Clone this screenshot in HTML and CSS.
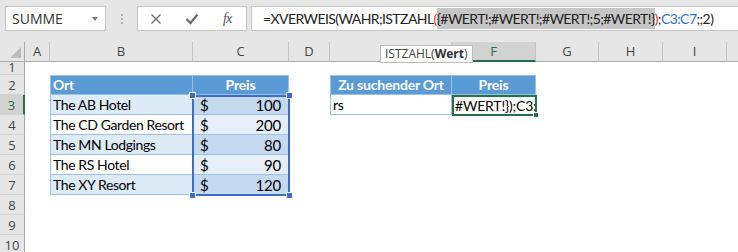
FILE: index.html
```html
<!DOCTYPE html>
<html lang="de">
<head>
  <meta charset="UTF-8">
  <title>XVERWEIS</title>
  <link rel="stylesheet" href="styles.css">
</head>
<body>
  <div class="topbar">
    <div class="namebox">
      <span>SUMME</span>
      <span class="caret"></span>
    </div>
    <div class="grip"><i></i><i></i><i></i></div>
    <div class="fxbox">
      <svg class="ico" width="12" height="12" viewBox="0 0 12 12">
        <path d="M1.5 1.5 L10.5 10.5 M10.5 1.5 L1.5 10.5" stroke="#6b6b6b" stroke-width="1.4" fill="none"/>
      </svg>
      <svg class="ico" width="14" height="12" viewBox="0 0 14 12">
        <path d="M1.5 6 L5.5 10 L12.5 1.5" stroke="#6b6b6b" stroke-width="2.2" fill="none"/>
      </svg>
      <span class="fx">fx</span>
    </div>
    <div class="formula">=XVERWEIS(WAHR;ISTZAHL<span class="red">(</span><span class="hl">{#WERT!;#WERT!;#WERT!;5;#WERT!}</span><span class="red">)</span>;<span class="ref">C3:C7</span>;;2)</div>
  </div>

  <div class="sheet">
    <div class="colheads">
      <div class="corner"><span class="tri"></span></div>
      <div class="ch">A</div>
      <div class="ch">B</div>
      <div class="ch">C</div>
      <div class="ch">D</div>
      <div class="ch">E</div>
      <div class="ch current">F</div>
      <div class="ch">G</div>
      <div class="ch">H</div>
      <div class="ch">I</div>
      <div class="ch"></div>
    </div>

    <div class="main">
      <div class="rowheads">
        <div class="rh first">1</div>
        <div class="rh">2</div>
        <div class="rh current">3</div>
        <div class="rh">4</div>
        <div class="rh">5</div>
        <div class="rh">6</div>
        <div class="rh">7</div>
        <div class="rh">8</div>
        <div class="rh">9</div>
        <div class="rh">10</div>
      </div>

      <div class="cells">
        <!-- Tabelle 1 -->
        <div class="cell th left top" style="grid-area: 2 / 2">Ort</div>
        <div class="cell th top center" style="grid-area: 2 / 3">Preis</div>

        <div class="cell band left" style="grid-area: 3 / 2">The AB Hotel</div>
        <div class="cell money sel-band" style="grid-area: 3 / 3"><span>$</span><span>100</span></div>
        <div class="cell left" style="grid-area: 4 / 2">The CD Garden Resort</div>
        <div class="cell money sel-plain" style="grid-area: 4 / 3"><span>$</span><span>200</span></div>
        <div class="cell band left" style="grid-area: 5 / 2">The MN Lodgings</div>
        <div class="cell money sel-band" style="grid-area: 5 / 3"><span>$</span><span>80</span></div>
        <div class="cell left" style="grid-area: 6 / 2">The RS Hotel</div>
        <div class="cell money sel-plain" style="grid-area: 6 / 3"><span>$</span><span>90</span></div>
        <div class="cell band left" style="grid-area: 7 / 2">The XY Resort</div>
        <div class="cell money sel-band" style="grid-area: 7 / 3"><span>$</span><span>120</span></div>

        <div class="selection">
          <i class="handle tl"></i><i class="handle tr"></i>
          <i class="handle bl"></i><i class="handle br"></i>
        </div>

        <!-- Tabelle 2 -->
        <div class="cell th left top center" style="grid-area: 2 / 5">Zu suchender Ort</div>
        <div class="cell th top center" style="grid-area: 2 / 6">Preis</div>
        <div class="cell left" style="grid-area: 3 / 5">rs</div>
        <div class="active"><span class="edit">#WERT!});C3:</span><i class="fill"></i></div>
      </div>
    </div>

    <div class="tip">ISTZAHL(<b>Wert</b>)</div>
  </div>
</body>
</html>
```

FILE: styles.css
```css
body {
  margin: 0;
  width: 738px;
  height: 252px;
  overflow: hidden;
  background-color: #fff;
  font-family: "Lato", sans-serif;
}

/* Bearbeitungsleiste */
.topbar {
  height: 42px;
  box-sizing: border-box;
  padding: 6px 0 0 5px;
  display: flex;
  align-items: flex-start;
  background-color: #e6e6e6;
}

.namebox {
  width: 101px;
  height: 25px;
  box-sizing: border-box;
  border: 1px solid #c6c6c6;
  background-color: #fff;
  display: flex;
  align-items: center;
  justify-content: space-between;
  padding: 0 7px 0 6px;
  font: 14px "Open Sans", sans-serif;
  color: #333;
}

.caret {
  width: 0;
  height: 0;
  border-left: 3px solid transparent;
  border-right: 3px solid transparent;
  border-top: 4px solid #7a7a7a;
}

.grip {
  width: 31px;
  height: 25px;
  display: flex;
  flex-direction: column;
  align-items: center;
  justify-content: center;
  gap: 2px;
}

.grip i {
  width: 2px;
  height: 2px;
  background-color: #b0b0b0;
}

.fxbox {
  width: 110px;
  height: 25px;
  box-sizing: border-box;
  border: 1px solid #c6c6c6;
  background-color: #fff;
  display: flex;
  align-items: center;
  padding-left: 12px;
}

.fxbox .ico + .ico {
  margin-left: 23px;
}

.fx {
  margin-left: 24px;
  font: italic 14px "Liberation Serif", serif;
  color: #555;
  letter-spacing: -1px;
}

.formula {
  flex: 1;
  min-width: 0;
  margin-left: 4px;
  height: 25px;
  box-sizing: border-box;
  border: 1px solid #c6c6c6;
  border-right: none;
  background-color: #fff;
  padding-left: 11px;
  font: 14px "Lato", sans-serif;
  letter-spacing: -0.58px;
  line-height: 23px;
  color: #222;
  white-space: nowrap;
  overflow: hidden;
}

.red {
  color: #d9301e;
}

.hl {
  background-color: #c6c6c6;
  padding: 2px 0;
}

.ref {
  color: #2f6fce;
}

/* Tabellenblatt */
.sheet {
  position: relative;
}

.colheads {
  display: flex;
  height: 20px;
  background-color: #e6e6e6;
}

.corner,
.ch {
  position: relative;
  flex: none;
  height: 20px;
  box-sizing: border-box;
  border-bottom: 1px solid #ababab;
  border-right: 1px solid #c4c4c4;
  font: 13px "Open Sans", sans-serif;
  color: #444;
  text-align: center;
  line-height: 19px;
}

.corner { width: 25px; border-right-color: #ababab; }
.ch:nth-child(2) { width: 25px; }
.ch:nth-child(3) { width: 143px; }
.ch:nth-child(4) { width: 96px; }
.ch:nth-child(5) { width: 41px; }
.ch:nth-child(6) { width: 122px; }
.ch:nth-child(7) { width: 84px; }
.ch:nth-child(8) { width: 63px; }
.ch:nth-child(9) { width: 64px; }
.ch:nth-child(10) { width: 64px; }
.ch:nth-child(11) { width: 64px; }

.ch.current {
  background-color: #d2d2d2;
  border-bottom: 2px solid #217346;
  color: #217346;
}

.tri {
  position: absolute;
  right: 3px;
  bottom: 3px;
  width: 0;
  height: 0;
  border-left: 11px solid transparent;
  border-bottom: 11px solid #bdbdbd;
}

.main {
  display: flex;
}

.rowheads {
  width: 25px;
  flex: none;
  background-color: #e6e6e6;
}

.rh {
  height: 20px;
  box-sizing: border-box;
  border-right: 1px solid #ababab;
  border-bottom: 1px solid #d4d4d4;
  font: 13px "Open Sans", sans-serif;
  line-height: 20px;
  color: #444;
  text-align: center;
}

.rh.first {
  height: 13px;
  line-height: 10px;
  overflow: hidden;
}

.rh.current {
  background-color: #d2d2d2;
  border-right: 2px solid #217346;
  color: #217346;
}

.cells {
  display: grid;
  grid-template-columns: 25px 143px 96px 41px 122px 84px 63px 64px 64px;
  grid-template-rows: 13px repeat(9, 20px);
}

.cell {
  box-sizing: border-box;
  border-right: 1px solid #9bc2e6;
  border-bottom: 1px solid #9bc2e6;
  padding: 0 2px;
  font-size: 14px;
  letter-spacing: -0.4px;
  line-height: 20px;
  color: #000;
  white-space: nowrap;
  overflow: hidden;
}

.cell.left { border-left: 1px solid #9bc2e6; }
.cell.top { border-top: 1px solid #9bc2e6; line-height: 18px; }
.cell.center { text-align: center; }

.th {
  background-color: #5b9bd5;
  color: #fff;
  font-weight: bold;
  letter-spacing: -0.2px;
}

.band { background-color: #ddebf7; }
.sel-band { background-color: #c5d9f1; }
.sel-plain { background-color: #e6eef8; }

.money {
  display: flex;
  justify-content: space-between;
  padding: 0 7px;
  font-size: 15px;
  letter-spacing: -0.2px;
}

.selection {
  grid-column: 3;
  grid-row: 3 / 8;
  position: relative;
  margin: 0 -1px -1px -1px;
  border: 2px solid #3b6cc7;
}

.handle {
  position: absolute;
  width: 5px;
  height: 5px;
  background-color: #3b6cc7;
  border: 1px solid #fff;
}

.handle.tl { top: -5px; left: -5px; }
.handle.tr { top: -5px; right: -5px; }
.handle.bl { bottom: -5px; left: -5px; }
.handle.br { bottom: -5px; right: -5px; }

.active {
  grid-column: 6;
  grid-row: 3;
  position: relative;
  margin: 0 -1px -1px 0;
  border: 2px solid #217346;
  background-color: #fff;
  padding-left: 1px;
  font-size: 14px;
  letter-spacing: -0.2px;
  line-height: 17px;
  white-space: nowrap;
}

.edit {
  display: block;
  overflow: hidden;
}

.fill {
  position: absolute;
  right: -4px;
  bottom: -4px;
  width: 4px;
  height: 4px;
  background-color: #217346;
  border: 1px solid #fff;
}

.tip {
  position: absolute;
  left: 380px;
  top: 3px;
  height: 18px;
  box-sizing: border-box;
  padding: 0 4px;
  border: 1px solid #bcbcbc;
  background-color: #fff;
  font: 12px "Open Sans", sans-serif;
  line-height: 16px;
  color: #444;
  white-space: nowrap;
}

.tip b {
  font-weight: bold;
  color: #333;
}
```
